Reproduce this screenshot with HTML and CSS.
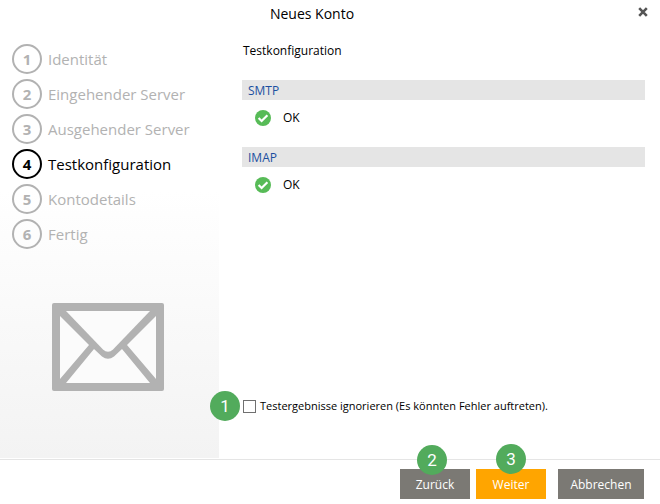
FILE: index.html
```html
<!DOCTYPE html>
<html lang="de">
<head>
    <meta charset="UTF-8">
    <title>Neues Konto</title>
    <link rel="stylesheet" href="styles.css">
</head>
<body>
    <div class="dialog">
        <header class="titlebar">
            <h1>Neues Konto</h1>
            <button class="close" type="button" aria-label="Schließen">
                <svg width="10" height="10" viewBox="0 0 10 10"><path d="M1.2 1.2L8.8 8.8M8.8 1.2L1.2 8.8" stroke="#555" stroke-width="2.6"/></svg>
            </button>
        </header>

        <div class="main">
            <aside class="sidebar">
                <ol class="steps">
                    <li><span class="num">1</span>Identität</li>
                    <li><span class="num">2</span>Eingehender Server</li>
                    <li><span class="num">3</span>Ausgehender Server</li>
                    <li class="active"><span class="num">4</span>Testkonfiguration</li>
                    <li><span class="num">5</span>Kontodetails</li>
                    <li><span class="num">6</span>Fertig</li>
                </ol>
                <svg class="envelope" width="112" height="88" viewBox="0 0 112 88">
                    <rect width="112" height="88" rx="2" fill="#b2b2b2"/>
                    <path d="M14 8H98L61 46.500Q56 51 51 46.500Z" fill="#fbfbfb"/>
                    <path d="M8 13L37 42L8 76ZM104 13L75 42L104 76Z" fill="#fbfbfb"/>
                    <path d="M14 80L42 46L50 53.500Q56 58 62 53.500L70 46L98 80Z" fill="#fbfbfb"/>
                </svg>
            </aside>

            <main class="content">
                <h2>Testkonfiguration</h2>
                <section class="test">
                    <h3>SMTP</h3>
                    <p>
                        <svg width="16" height="16" viewBox="0 0 16 16"><circle cx="8" cy="8" r="8" fill="#57bb57"/><path d="M3.600 8L6.600 11L12.400 5.200" fill="none" stroke="#fff" stroke-width="2.200"/></svg>
                        OK
                    </p>
                </section>
                <section class="test">
                    <h3>IMAP</h3>
                    <p>
                        <svg width="16" height="16" viewBox="0 0 16 16"><circle cx="8" cy="8" r="8" fill="#57bb57"/><path d="M3.600 8L6.600 11L12.400 5.200" fill="none" stroke="#fff" stroke-width="2.200"/></svg>
                        OK
                    </p>
                </section>
                <div class="ignore">
                    <input type="checkbox" id="ignore">
                    <label for="ignore">Testergebnisse ignorieren (Es könnten Fehler auftreten).</label>
                    <span class="marker marker-side">1</span>
                </div>
            </main>
        </div>

        <footer class="buttons">
            <div class="action">
                <button class="btn" type="button">Zurück</button>
                <span class="marker marker-back">2</span>
            </div>
            <div class="action">
                <button class="btn primary" type="button">Weiter</button>
                <span class="marker marker-next">3</span>
            </div>
            <button class="btn cancel" type="button">Abbrechen</button>
        </footer>
    </div>
</body>
</html>
```
FILE: styles.css
```css
* {
    box-sizing: border-box;
}
body {
    margin: 0;
    background: #fff;
    color: #000;
    font-family: "Segoe UI", "Open Sans", sans-serif;
    font-size: 12px;
    line-height: 16px;
}
h1, h2, h3, p, ol {
    margin: 0;
    padding: 0;
    font-weight: normal;
}
svg {
    display: block;
}
.dialog {
    display: flex;
    flex-direction: column;
    min-height: 100vh;
}

/* title */
.titlebar {
    position: relative;
    padding: 4px 36px 4px 0;
    text-align: center;
}
h1 {
    font-size: 14px;
    line-height: 20px;
}
.close {
    position: absolute;
    top: 3px;
    right: 8px;
    padding: 4px;
    border: none;
    background: none;
    cursor: pointer;
}

.main {
    display: flex;
    flex: 1;
}

/* steps */
.sidebar {
    display: flex;
    flex-direction: column;
    flex: 0 0 219px;
    margin-bottom: 1px;
    padding-top: 16px;
    background: linear-gradient(#fff 38%, #f3f3f3);
}
.steps {
    display: flex;
    flex-direction: column;
    gap: 5px;
    padding-left: 12px;
    list-style: none;
}
.steps li {
    display: flex;
    align-items: center;
    gap: 6px;
    font-size: 15px;
    color: #b2b2b2;
}
.num {
    width: 30px;
    height: 30px;
    border: 2px solid #b2b2b2;
    border-radius: 50%;
    font-weight: bold;
    line-height: 26px;
    text-align: center;
}
.steps .active {
    color: #000;
}
.active .num {
    border-color: #000;
}
.envelope {
    margin: 54px 0 0 52px;
}

/* test results */
.content {
    display: flex;
    flex: 1;
    flex-direction: column;
    padding: 15px 15px 45px 23px;
}
h2 {
    margin-bottom: 21px;
    padding-left: 1px;
    font-size: 12px;
}
.test {
    margin-bottom: 18px;
}
.test h3 {
    padding: 3px 6px 1px;
    background: #e5e5e5;
    color: #1c4fa0;
    font-size: 12px;
}
.test p {
    display: flex;
    align-items: center;
    gap: 12px;
    padding: 10px 13px 3px;
}
.ignore {
    position: relative;
    display: flex;
    align-items: center;
    gap: 4px;
    margin-top: auto;
    padding-left: 1px;
}
.ignore label {
    font-size: 11px;
}
.ignore input {
    appearance: none;
    width: 13px;
    height: 13px;
    margin: 0;
    border: 1px solid #707070;
    background: #fff;
}
.ignore input:checked {
    background: #57bb57;
}

/* buttons */
.buttons {
    display: flex;
    justify-content: flex-end;
    gap: 6px;
    padding: 9px 16px 5px;
    border-top: 1px solid #e5e5e5;
}
.action {
    position: relative;
}
.btn {
    width: 70px;
    height: 30px;
    padding: 1px 0 0;
    border: none;
    background: #7b7974;
    color: #fff;
    font: inherit;
    cursor: pointer;
}
.primary {
    background: #ffa500;
}
.cancel {
    width: 86px;
    margin-left: 6px;
}

/* numbered markers */
.marker {
    position: absolute;
    width: 30px;
    height: 30px;
    border-radius: 50%;
    background: #52ab5c;
    color: #fff;
    font-family: Roboto, sans-serif;
    font-size: 17px;
    line-height: 30px;
    text-align: center;
}
.marker-side {
    top: -7px;
    left: -32px;
}
.marker-back {
    top: -24px;
    left: 17px;
}
.marker-next {
    top: -25px;
    left: 20px;
}
```
